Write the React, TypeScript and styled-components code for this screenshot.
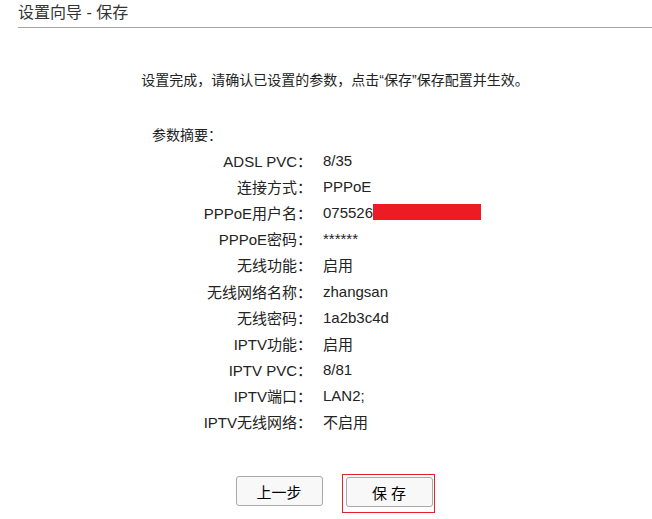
import styled, { createGlobalStyle } from "styled-components";

const GlobalStyle = createGlobalStyle`
  html, body {
    margin: 0;
    padding: 0;
    background: #ffffff;
  }
  body {
    font-family: "Liberation Sans", "Noto Sans CJK SC", sans-serif;
    color: #222222;
  }
`;

type Item = { label: string; value: string; masked?: boolean };

const items: Item[] = [
  { label: "ADSL PVC：", value: "8/35" },
  { label: "连接方式：", value: "PPPoE" },
  { label: "PPPoE用户名：", value: "075526", masked: true },
  { label: "PPPoE密码：", value: "******" },
  { label: "无线功能：", value: "启用" },
  { label: "无线网络名称：", value: "zhangsan" },
  { label: "无线密码：", value: "1a2b3c4d" },
  { label: "IPTV功能：", value: "启用" },
  { label: "IPTV PVC：", value: "8/81" },
  { label: "IPTV端口：", value: "LAN2;" },
  { label: "IPTV无线网络：", value: "不启用" },
];

export default function App() {
  return (
    <Page>
      <GlobalStyle />
      <Header>设置向导 - 保存</Header>
      <Intro>设置完成，请确认已设置的参数，点击“保存”保存配置并生效。</Intro>
      <Summary>
        <SummaryTitle>参数摘要：</SummaryTitle>
        <Table>
          {items.map((item) => (
            <Row key={item.label}>
              <Label>{item.label}</Label>
              <Value>
                {item.value}
                {item.masked && <Redact />}
              </Value>
            </Row>
          ))}
        </Table>
      </Summary>
      <Actions>
        <Button type="button">上一步</Button>
        <Highlight>
          <Button type="button">保 存</Button>
        </Highlight>
      </Actions>
    </Page>
  );
}

const Page = styled.div`
  width: 634px;
  padding-left: 18px;
`;

const Header = styled.div`
  height: 27px;
  line-height: 26px;
  font-size: 16px;
  color: #333333;
  border-bottom: 1px solid #a6a6a6;
`;

const Intro = styled.div`
  margin-top: 40px;
  line-height: 24px;
  font-size: 14px;
  text-align: center;
`;

const Summary = styled.div`
  margin-top: 30px;
  padding-left: 134px;
`;

const SummaryTitle = styled.div`
  font-size: 14px;
  line-height: 26px;
`;

const Table = styled.div`
  display: flex;
  flex-direction: column;
  margin-top: -1px;
`;

const Row = styled.div`
  display: grid;
  grid-template-columns: 160px 1fr;
  column-gap: 11px;
  height: 26.2px;
  align-items: center;
  font-size: 15px;
`;

const Label = styled.span`
  text-align: right;
  white-space: nowrap;
`;

const Value = styled.span`
  display: flex;
  align-items: center;
  white-space: nowrap;
`;

const Redact = styled.span`
  display: inline-block;
  width: 108px;
  height: 16px;
  background: #ed1c24;
`;

const Actions = styled.div`
  margin-top: 41px;
  display: flex;
  justify-content: center;
  align-items: flex-start;
  gap: 19px;
`;

const Highlight = styled.span`
  display: inline-flex;
  margin-top: -2px;
  padding: 2px 1px 5px 3px;
  border: 1px solid #e3202b;
`;

const Button = styled.button`
  width: 87px;
  height: 30px;
  padding: 0;
  border: 1px solid #a9a9a9;
  border-radius: 3px;
  background: #f8f8f8;
  color: #000000;
  font-family: "Liberation Sans", "Noto Sans CJK SC", sans-serif;
  font-size: 15px;
  cursor: pointer;
`;
